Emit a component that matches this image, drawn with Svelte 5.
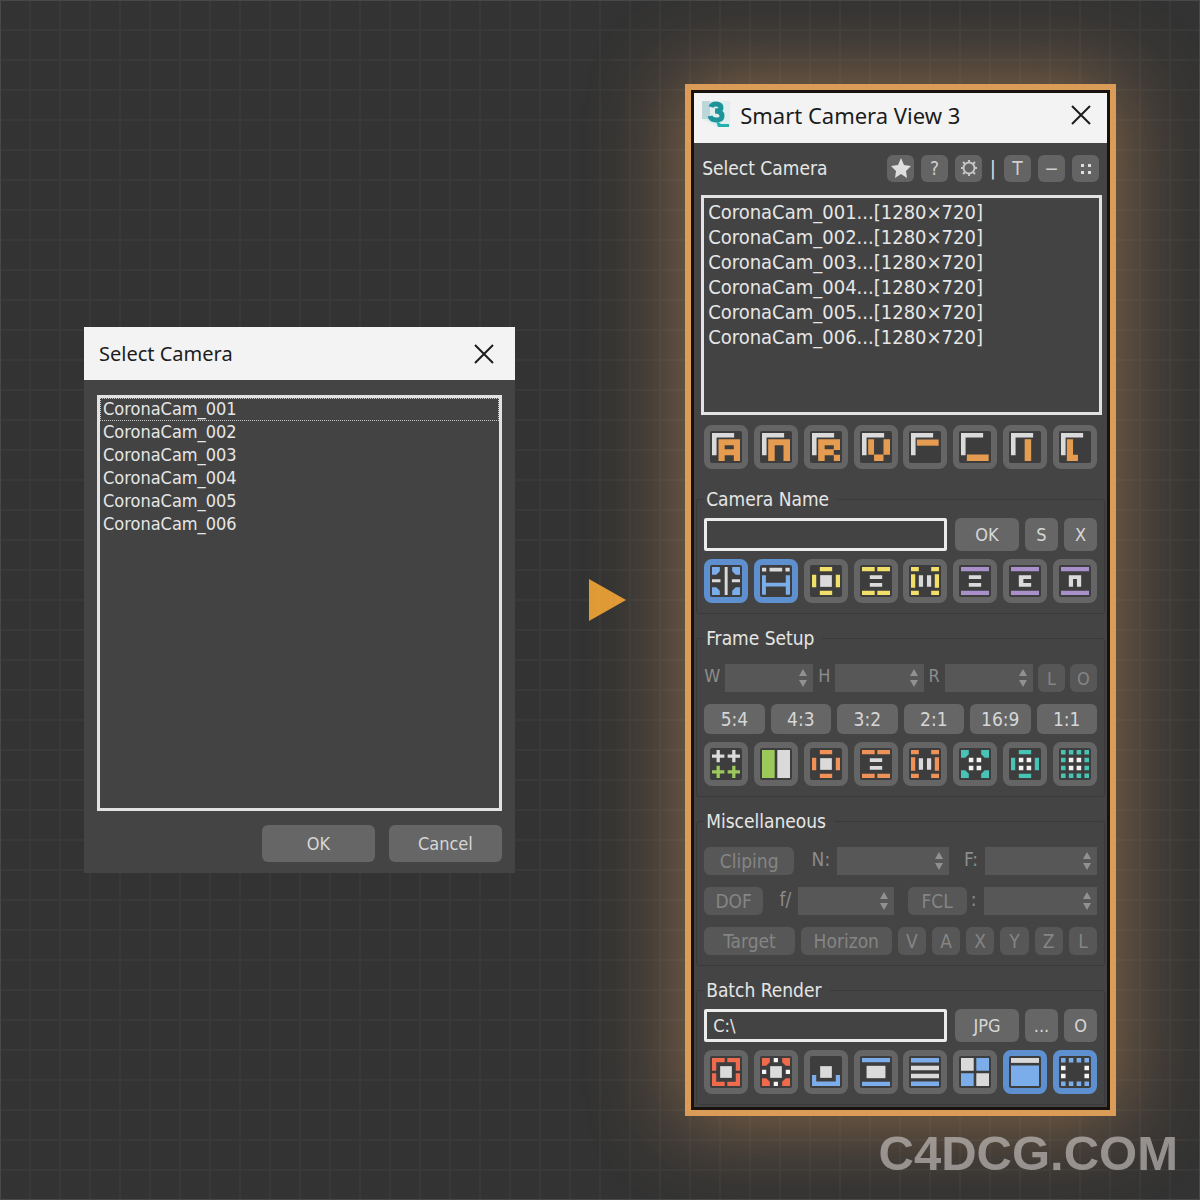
<script lang="ts">
  type Shape = [color: string, d: string];
  type Tool = { name: string; shapes: Shape[] };

  const cameras = [1, 2, 3, 4, 5, 6].map((n) => `CoronaCam_00${n}`);
  const ratios = ["5:4", "4:3", "3:2", "2:1", "16:9", "1:1"];
  const axes = ["V", "A", "X", "Y", "Z", "L"];

  let cameraName = $state("");
  let outputPath = $state("C:\\");
  let active = $state(["Center lines", "Safe width", "Show header", "Region"]);

  const toggle = (name: string) => {
    active = active.includes(name)
      ? active.filter((item) => item !== name)
      : [...active, name];
  };

  // All tool icons are drawn on an 86 x 86 grid
  const rect = (x: number, y: number, w: number, h: number) =>
    `M${x} ${y}h${w}v${h}h${-w}z`;

  const corner = "M0 0h68v14h-54v54h-14z";
  const bars = rect(0, 0, 86, 13) + rect(0, 73, 86, 13);
  const ring =
    rect(24, 0, 38, 13) + rect(24, 73, 38, 13) + rect(0, 24, 13, 38) + rect(73, 24, 13, 38);
  const dashes =
    rect(0, 0, 39, 13) + rect(47, 0, 39, 13) + rect(0, 73, 39, 13) + rect(47, 73, 39, 13);
  const columns =
    rect(0, 0, 24, 13) + rect(62, 0, 24, 13) + rect(0, 73, 24, 13) + rect(62, 73, 24, 13) +
    rect(0, 22, 13, 42) + rect(73, 22, 13, 42);
  const brackets =
    "M0 0h24v13l-11 11h-13zM86 0h-24v13l11 11h13zM0 86h24v-13l-11 -11h-13zM86 86h-24v-13l11 -11h13z";
  const block = rect(25, 25, 36, 36);
  const equals = rect(24, 25, 38, 12) + rect(24, 49, 38, 12);
  const pipes = rect(24, 25, 13, 36) + rect(49, 25, 13, 36);
  const quad =
    rect(24, 24, 14, 14) + rect(48, 24, 14, 14) + rect(24, 48, 14, 14) + rect(48, 48, 14, 14);
  const plus = (x: number, y: number) =>
    rect(x - 5, y - 19, 10, 38) + rect(x - 19, y - 5, 38, 10);
  const dots = (cells: number[][]) =>
    cells.map(([x, y]) => rect(x * 24, y * 24, 14, 14)).join("");

  const edge = [
    [0, 0], [1, 0], [2, 0], [3, 0],
    [0, 3], [1, 3], [2, 3], [3, 3],
  ];
  const sides = [[0, 1], [0, 2], [3, 1], [3, 2]];

  const cameraTools: Tool[] = [
    { name: "Sort all", shapes: [["light", corner], ["amber", "M20 19h66v67h-19v-18h-28v18h-19zM39 38v12h28v-12z"]] },
    { name: "Sort names", shapes: [["light", corner], ["amber", "M19 19h67v67h-20v-48h-27v48h-20z"]] },
    { name: "Rename", shapes: [["light", corner], ["amber", "M19 19h67v33h-19v15h19v19h-19v-18h-28v18h-20zM39 38v12h28v-12z"]] },
    { name: "Views", shapes: [["light", corner], ["amber", rect(19, 19, 18, 48) + rect(66, 19, 20, 48) + rect(37, 66, 29, 20)]] },
    { name: "Align top", shapes: [["light", corner], ["amber", rect(18, 20, 67, 19)]] },
    { name: "Align bottom", shapes: [["light", corner], ["amber", rect(18, 66, 67, 20)]] },
    { name: "Align middle", shapes: [["light", corner], ["amber", rect(42, 19, 20, 67)]] },
    { name: "Align left", shapes: [["light", corner], ["amber", "M18 19h19v48h15v19h-34z"]] },
  ];

  const nameTools: Tool[] = [
    { name: "Center lines", shapes: [["sky", brackets], ["light", rect(39, 0, 9, 86) + rect(0, 38, 26, 9) + rect(61, 38, 25, 9)]] },
    { name: "Safe width", shapes: [["light", rect(0, 2, 13, 12) + rect(23, 2, 39, 12) + rect(72, 2, 13, 12)], ["sky", "M0 25h12v23h61v-23h13v60h-13v-25h-61v25h-12z"]] },
    { name: "Fit all", shapes: [["yellow", ring], ["light", block]] },
    { name: "Fit rows", shapes: [["yellow", dashes], ["light", equals]] },
    { name: "Fit columns", shapes: [["yellow", columns], ["light", pipes]] },
    { name: "Equal", shapes: [["purple", bars], ["light", equals]] },
    { name: "Copy", shapes: [["purple", bars], ["light", "M24 25h38v12h-24v12h24v12h-38z"]] },
    { name: "Next", shapes: [["purple", bars], ["light", "M24 25h38v36h-13v-24h-12v24h-13z"]] },
  ];

  const frameTools: Tool[] = [
    { name: "Add frames", shapes: [["light", plus(19, 19) + plus(67, 19)], ["green", plus(19, 67) + plus(67, 67)]] },
    { name: "Split", shapes: [["green", rect(0, 0, 39, 86)], ["light", rect(47, 0, 39, 86)]] },
    { name: "Frame all", shapes: [["orange", ring], ["light", block]] },
    { name: "Frame rows", shapes: [["orange", dashes], ["light", equals]] },
    { name: "Frame columns", shapes: [["orange", columns], ["light", pipes]] },
    { name: "Frame corners", shapes: [["teal", brackets], ["white", quad]] },
    { name: "Frame edges", shapes: [["teal", ring], ["white", quad]] },
    { name: "Frame grid", shapes: [["teal", dots([...edge, ...sides])], ["white", quad]] },
  ];

  const renderTools: Tool[] = [
    { name: "Render crop", shapes: [["red", "M0 0h39v13h-26v26h-13zM47 0h39v39h-13v-26h-26zM0 47h13v26h26v13h-39zM73 47h13v39h-39v-13h26z"], ["light", block]] },
    { name: "Render region", shapes: [["red", brackets], ["white", rect(36, 0, 13, 13) + rect(36, 73, 13, 13) + rect(0, 36, 13, 13) + rect(73, 36, 13, 13)], ["light", block]] },
    { name: "Save", shapes: [["sky", "M0 52h13v20h60v-20h13v34h-86z"], ["light", block]] },
    { name: "Letterbox", shapes: [["sky", bars], ["light", rect(14, 24, 58, 38)]] },
    { name: "Queue", shapes: [["sky", rect(0, 0, 86, 14) + rect(0, 72, 86, 14)], ["light", rect(0, 24, 86, 14) + rect(0, 48, 86, 14)]] },
    { name: "Tiles", shapes: [["light", rect(0, 0, 39, 39) + rect(47, 47, 39, 39)], ["sky", rect(47, 0, 39, 39) + rect(0, 47, 39, 39)]] },
    { name: "Show header", shapes: [["light", rect(0, 0, 86, 15)], ["sky", rect(0, 23, 86, 63)]] },
    { name: "Region", shapes: [["sky", dots(edge)], ["white", dots(sides)]] },
  ];
</script>

{#snippet closeIcon()}
  <svg class="close-icon" viewBox="0 0 20 20" aria-hidden="true">
    <path d="M1 1l18 18M19 1l-18 18" />
  </svg>
{/snippet}

{#snippet toolbar(tools: Tool[])}
  <div class="toolbar">
    {#each tools as tool (tool.name)}
      <button
        class="tool"
        class:active={active.includes(tool.name)}
        aria-label={tool.name}
        onclick={() => toggle(tool.name)}
      >
        <svg viewBox="0 0 86 86">
          {#each tool.shapes as [color, d]}
            <path class={color} {d} />
          {/each}
        </svg>
      </button>
    {/each}
  </div>
{/snippet}

{#snippet spinner(id: string)}
  <div class="spinner">
    <input {id} type="text" inputmode="numeric" disabled />
    <svg viewBox="0 0 8 18" aria-hidden="true">
      <path d="M4 0l4 7h-8zM4 18l4 -7h-8z" />
    </svg>
  </div>
{/snippet}

<main class="page">
  <section class="window dialog">
    <header class="titlebar">
      <h1>Select Camera</h1>
      <button class="close" aria-label="Close">{@render closeIcon()}</button>
    </header>
    <div class="dialog-body">
      <select class="list" size="6" aria-label="Cameras">
        {#each cameras as camera, i}
          <option class:focused={i === 0}>{camera}</option>
        {/each}
      </select>
      <div class="dialog-actions">
        <button class="btn">OK</button>
        <button class="btn">Cancel</button>
      </div>
    </div>
  </section>

  <svg class="arrow" viewBox="0 0 37 42" aria-hidden="true">
    <path d="M0 0l37 21l-37 21z" />
  </svg>

  <section class="window panel">
    <header class="titlebar">
      <svg class="logo" viewBox="0 0 28 28" aria-hidden="true">
        <path class="logo-back" d="M0 0h28v26h-13l-15 -8z" />
        <path class="logo-shade" d="M0 0h8v18h-8z" />
        <path class="logo-three" d="M9 6q1 -3 5 -3q5 0 5 4q0 3 -6 3q7 0 7 5q0 4 -6 4q-5 0 -6 -4" />
        <path class="logo-foot" d="M14 20q3 1 5 3h8v3h-11z" />
      </svg>
      <h1>Smart Camera View 3</h1>
      <button class="close" aria-label="Close">{@render closeIcon()}</button>
    </header>

    <div class="panel-body">
      <div class="heading">
        <label for="camera-list">Select Camera</label>
        <div class="heading-actions">
          <button class="mini" aria-label="Favorites">
            <svg viewBox="0 0 20 20">
              <path class="fill" d="M10 0l3 7l7 1l-5 5l1 7l-6 -4l-6 4l1 -7l-5 -5l7 -1z" />
            </svg>
          </button>
          <button class="mini">?</button>
          <button class="mini" aria-label="Settings">
            <svg viewBox="0 0 20 20">
              <circle cx="10" cy="10" r="5.5" />
              <path d="M10 2v3M10 15v3M2 10h3M15 10h3M4 4l2 2M14 14l2 2M16 4l-2 2M6 14l-2 2" />
            </svg>
          </button>
          <span class="divider">|</span>
          <button class="mini">T</button>
          <button class="mini">−</button>
          <button class="mini" aria-label="Layout">
            <svg viewBox="0 0 20 20">
              <path class="fill" d="M5 6h3v3h-3zM12 6h3v3h-3zM5 13h3v3h-3zM12 13h3v3h-3z" />
            </svg>
          </button>
        </div>
      </div>

      <select id="camera-list" class="list" size="6">
        {#each cameras as camera}
          <option>{camera}...[1280×720]</option>
        {/each}
      </select>

      <div class="camera-tools">{@render toolbar(cameraTools)}</div>

      <fieldset>
        <legend>Camera Name</legend>
        <div class="field-row">
          <input type="text" aria-label="Camera name" bind:value={cameraName} />
          <button class="btn wide">OK</button>
          <button class="btn">S</button>
          <button class="btn">X</button>
        </div>
        {@render toolbar(nameTools)}
      </fieldset>

      <fieldset class="spaced">
        <legend>Frame Setup</legend>
        <div class="size-row">
          <label for="frame-w">W</label>
          {@render spinner("frame-w")}
          <label for="frame-h">H</label>
          {@render spinner("frame-h")}
          <label for="frame-r">R</label>
          {@render spinner("frame-r")}
          <button class="btn small" disabled>L</button>
          <button class="btn small" disabled>O</button>
        </div>
        <div class="ratio-row">
          {#each ratios as ratio}
            <button class="btn">{ratio}</button>
          {/each}
        </div>
        {@render toolbar(frameTools)}
      </fieldset>

      <fieldset class="spaced">
        <legend>Miscellaneous</legend>
        <div class="clip-row">
          <button class="btn" disabled>Cliping</button>
          <label for="near">N:</label>
          {@render spinner("near")}
          <label for="far">F:</label>
          {@render spinner("far")}
        </div>
        <div class="dof-row">
          <button class="btn" disabled>DOF</button>
          <label for="fstop">f/</label>
          {@render spinner("fstop")}
          <span></span>
          <button class="btn" disabled>FCL</button>
          <label for="focal">:</label>
          {@render spinner("focal")}
        </div>
        <div class="target-row">
          <button class="btn large" disabled>Target</button>
          <button class="btn large" disabled>Horizon</button>
          {#each axes as axis}
            <button class="btn" disabled>{axis}</button>
          {/each}
        </div>
      </fieldset>

      <fieldset>
        <legend>Batch Render</legend>
        <div class="field-row">
          <input type="text" aria-label="Output path" bind:value={outputPath} />
          <button class="btn wide">JPG</button>
          <button class="btn">...</button>
          <button class="btn">O</button>
        </div>
        {@render toolbar(renderTools)}
      </fieldset>
    </div>
  </section>

  <div class="watermark">C4DCG.COM</div>
</main>

<style>
  :global(body) {
    margin: 0;
    background: #333;
  }

  * {
    box-sizing: border-box;
  }

  .page {
    position: relative;
    min-height: 100vh;
    padding: 84px 7%;
    display: grid;
    grid-template-columns: minmax(0, 43fr) minmax(0, 17fr) minmax(0, 43fr);
    align-items: center;
    overflow: hidden;
    font-family: "DejaVu Sans Condensed", "Noto Sans", sans-serif;
    font-size: 18px;
    color: #e6e6e6;
    background-color: #333;
    background-image:
      linear-gradient(to right, #393939 2px, transparent 2px),
      linear-gradient(to bottom, #393939 2px, transparent 2px);
    background-size: 30px 30px;
    background-position: -1px -1px;
    box-shadow: inset 0 0 0 1px #484848;
  }

  h1 {
    flex: 1;
    margin: 0;
    font-family: "Noto Sans", "Open Sans", sans-serif;
    font-size: 20px;
    font-weight: 400;
    line-height: 28px;
    white-space: nowrap;
  }

  button,
  input,
  select {
    margin: 0;
    font: inherit;
    color: inherit;
  }

  button {
    padding: 0;
    border: 0;
  }

  .window {
    background: #444;
  }

  .titlebar {
    display: flex;
    align-items: center;
    color: #1c1c1c;
    background: #f3f3f3;
  }

  .close {
    display: flex;
    background: none;
  }

  .close-icon {
    width: 20px;
    height: 20px;
    fill: none;
    stroke: #1c1c1c;
    stroke-width: 2;
  }

  .dialog .titlebar {
    height: 53px;
    padding: 0 21px 0 15px;
  }

  .dialog-body {
    display: flex;
    flex-direction: column;
    gap: 14px;
    padding: 15px 13px 11px;
  }

  .list {
    display: block;
    width: 100%;
    height: 416px;
    padding: 0;
    border: 3px solid #e2e2e2;
    border-radius: 0;
    outline: 0;
    background: #434343;
    overflow: hidden;
  }

  .list option {
    height: 23px;
    min-height: 0;
    padding: 0 3px;
    line-height: 23px;
  }

  .list .focused {
    outline: 1px dotted #c8c8c8;
    outline-offset: -1px;
  }

  .dialog-actions {
    display: flex;
    justify-content: flex-end;
    gap: 14px;
  }

  .dialog-actions .btn {
    width: 113px;
    height: 37px;
  }

  .btn {
    display: flex;
    align-items: center;
    justify-content: center;
    width: 33px;
    height: 100%;
    border-radius: 6px;
    color: #d6d6d6;
    background: #666;
  }

  .btn:disabled {
    color: #858585;
    background: #575757;
  }

  .arrow {
    width: 37px;
    height: 42px;
    margin-left: 16px;
    justify-self: center;
    fill: #e09b35;
  }

  .panel {
    border: 6px solid #db9c58;
    outline: 3px solid #17120e;
    outline-offset: -9px;
    padding: 3px;
    box-shadow: 0 0 80px 8px rgba(230, 165, 100, 0.45);
  }

  .panel .titlebar {
    height: 50px;
    padding: 0 16px 6px 8px;
  }

  .panel h1 {
    font-size: 22px;
  }

  .logo {
    width: 28px;
    height: 28px;
    margin-right: 10px;
  }

  .logo-back {
    fill: #e0eeee;
  }

  .logo-shade {
    fill: #bcd6da;
  }

  .logo-three {
    fill: none;
    stroke: #1d9499;
    stroke-width: 5;
  }

  .logo-foot {
    fill: #22b3b0;
  }

  .panel-body {
    padding: 11px 2px 2px;
  }

  .heading {
    display: flex;
    align-items: center;
    justify-content: space-between;
    height: 28px;
    margin: 0 6px 13px;
    font-size: 19px;
  }

  .heading-actions {
    display: flex;
    align-items: center;
    gap: 7px;
  }

  .mini {
    display: flex;
    align-items: center;
    justify-content: center;
    width: 27px;
    height: 27px;
    border-radius: 6px;
    color: #cfcfcf;
    background: #646464;
  }

  .mini svg {
    width: 20px;
    height: 20px;
    fill: none;
    stroke: #c4c4c4;
    stroke-width: 2;
  }

  .mini .fill {
    fill: #dedede;
    stroke: none;
  }

  .divider {
    width: 8px;
    text-align: center;
  }

  .panel .list {
    width: auto;
    min-width: calc(100% - 8px);
    height: 220px;
    margin: 0 4px 0 5px;
    padding-top: 2px;
    font-size: 20px;
  }

  .panel .list option {
    height: 25px;
    padding: 0 4px;
    line-height: 25px;
  }

  .camera-tools {
    margin: 10px 8px 18px;
  }

  .toolbar {
    display: flex;
    justify-content: space-between;
  }

  .tool {
    display: flex;
    align-items: center;
    justify-content: center;
    width: 44px;
    height: 44px;
    border: 6px solid #656565;
    border-radius: 8px;
    background: #3d3d3d;
  }

  .tool.active {
    border-color: #5e90cf;
  }

  .tool svg {
    width: 28px;
    height: 28px;
    flex: none;
  }

  .light { fill: #dadada; }
  .white { fill: #f4f4f4; }
  .amber { fill: #e59c50; }
  .sky { fill: #7badea; }
  .yellow { fill: #f2df69; }
  .purple { fill: #aa90cb; }
  .green { fill: #9cc85c; }
  .orange { fill: #f09258; }
  .teal { fill: #48c4b7; }
  .red { fill: #f06a4c; }

  fieldset {
    min-width: 0;
    margin: 0 0 12px;
    padding: 7px 7px 10px;
    border: 1px solid #3a3a3a;
    border-radius: 3px;
  }

  fieldset:last-child {
    margin-bottom: 0;
  }

  fieldset.spaced {
    padding-top: 14px;
  }

  legend {
    padding: 0 8px 0 2px;
    font-size: 19px;
    line-height: 24px;
  }

  .field-row {
    display: flex;
    gap: 6px;
    height: 33px;
    margin-bottom: 8px;
  }

  .field-row input {
    flex: 1;
    min-width: 0;
    margin-right: 2px;
    padding: 0 6px;
    border: 3px solid #ececec;
    border-radius: 2px;
    outline: 0;
    background: #434343;
  }

  .field-row .wide {
    width: 64px;
  }

  .size-row,
  .ratio-row,
  .target-row {
    display: flex;
    gap: 6px;
    height: 28px;
    margin-bottom: 12px;
  }

  .size-row {
    gap: 5px;
  }

  .size-row label,
  .clip-row label,
  .dof-row label {
    line-height: 24px;
    color: #8c8c8c;
  }

  .size-row .small {
    width: 27px;
  }

  .ratio-row {
    height: 30px;
    margin-bottom: 8px;
    font-size: 19px;
  }

  .ratio-row .btn {
    flex: 1;
  }

  .spinner {
    display: flex;
    align-items: center;
    flex: 1;
    min-width: 0;
    height: 28px;
    padding-right: 6px;
    background: #575757;
  }

  .spinner input {
    flex: 1;
    width: 0;
    height: 100%;
    padding: 0 4px;
    border: 0;
    background: none;
  }

  .spinner svg {
    width: 8px;
    height: 18px;
    fill: #919191;
  }

  .clip-row,
  .dof-row {
    display: grid;
    height: 28px;
    margin-bottom: 12px;
  }

  .clip-row {
    grid-template-columns: 90px 43px 1fr 36px 1fr;
  }

  .dof-row {
    grid-template-columns: 59px 35px 95fr 14px 59px 17px 113fr;
  }

  .clip-row,
  .dof-row,
  .target-row {
    font-size: 19px;
  }

  .clip-row .btn,
  .dof-row .btn {
    width: 100%;
  }

  .clip-row label,
  .dof-row label {
    padding-right: 7px;
    text-align: right;
  }

  .target-row {
    margin-bottom: 0;
  }

  .target-row .btn {
    flex: 28;
  }

  .target-row .large {
    flex: 90;
  }

  .watermark {
    position: absolute;
    right: 22px;
    bottom: 20px;
    font-family: "Liberation Sans", Arial, sans-serif;
    font-size: 49px;
    font-weight: 700;
    line-height: 54px;
    color: rgba(205, 200, 198, 0.62);
  }
</style>
